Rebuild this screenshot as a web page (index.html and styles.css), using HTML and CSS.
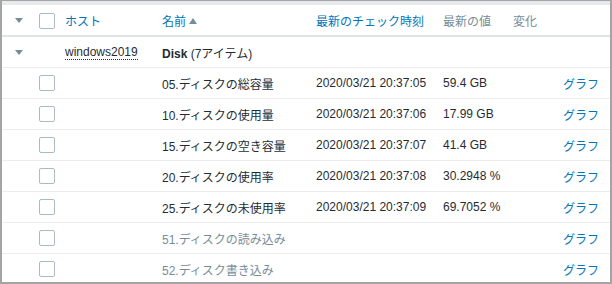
FILE: index.html
```html
<!DOCTYPE html>
<html lang="ja">
<head>
    <meta charset="UTF-8">
    <title>最新データ</title>
    <link rel="stylesheet" href="styles.css">
</head>
<body>
    <div class="frame">
        <div class="list">
            <div class="row head">
                <div class="cell toggle"><span class="arrow-down"></span></div>
                <div class="cell check"><span class="box"></span></div>
                <div class="cell link">ホスト</div>
                <div class="cell link">名前<span class="sort-up"></span></div>
                <div class="cell link">最新のチェック時刻</div>
                <div class="cell muted">最新の値</div>
                <div class="cell muted">変化</div>
                <div class="cell graph"></div>
            </div>

            <div class="row group">
                <div class="cell toggle"><span class="arrow-down"></span></div>
                <div class="cell check"></div>
                <div class="cell"><span class="host">windows2019</span></div>
                <div class="cell wide"><span><b>Disk</b> (7アイテム)</span></div>
            </div>

            <div class="row">
                <div class="cell toggle"></div>
                <div class="cell check"><span class="box"></span></div>
                <div class="cell"></div>
                <div class="cell">05.ディスクの総容量</div>
                <div class="cell">2020/03/21 20:37:05</div>
                <div class="cell">59.4 GB</div>
                <div class="cell"></div>
                <div class="cell graph"><a href="#">グラフ</a></div>
            </div>
            <div class="row">
                <div class="cell toggle"></div>
                <div class="cell check"><span class="box"></span></div>
                <div class="cell"></div>
                <div class="cell">10.ディスクの使用量</div>
                <div class="cell">2020/03/21 20:37:06</div>
                <div class="cell">17.99 GB</div>
                <div class="cell"></div>
                <div class="cell graph"><a href="#">グラフ</a></div>
            </div>
            <div class="row">
                <div class="cell toggle"></div>
                <div class="cell check"><span class="box"></span></div>
                <div class="cell"></div>
                <div class="cell">15.ディスクの空き容量</div>
                <div class="cell">2020/03/21 20:37:07</div>
                <div class="cell">41.4 GB</div>
                <div class="cell"></div>
                <div class="cell graph"><a href="#">グラフ</a></div>
            </div>
            <div class="row">
                <div class="cell toggle"></div>
                <div class="cell check"><span class="box"></span></div>
                <div class="cell"></div>
                <div class="cell">20.ディスクの使用率</div>
                <div class="cell">2020/03/21 20:37:08</div>
                <div class="cell">30.2948 %</div>
                <div class="cell"></div>
                <div class="cell graph"><a href="#">グラフ</a></div>
            </div>
            <div class="row">
                <div class="cell toggle"></div>
                <div class="cell check"><span class="box"></span></div>
                <div class="cell"></div>
                <div class="cell">25.ディスクの未使用率</div>
                <div class="cell">2020/03/21 20:37:09</div>
                <div class="cell">69.7052 %</div>
                <div class="cell"></div>
                <div class="cell graph"><a href="#">グラフ</a></div>
            </div>
            <div class="row disabled">
                <div class="cell toggle"></div>
                <div class="cell check"><span class="box"></span></div>
                <div class="cell"></div>
                <div class="cell">51.ディスクの読み込み</div>
                <div class="cell"></div>
                <div class="cell"></div>
                <div class="cell"></div>
                <div class="cell graph"><a href="#">グラフ</a></div>
            </div>
            <div class="row disabled">
                <div class="cell toggle"></div>
                <div class="cell check"><span class="box"></span></div>
                <div class="cell"></div>
                <div class="cell">52.ディスク書き込み</div>
                <div class="cell"></div>
                <div class="cell"></div>
                <div class="cell"></div>
                <div class="cell graph"><a href="#">グラフ</a></div>
            </div>
        </div>
    </div>
</body>
</html>
```

FILE: styles.css
```css
body {
    margin: 0;
    font-family: "Liberation Sans", Arial, "Noto Sans CJK JP", sans-serif;
    font-size: 12px;
    color: #1f2c33;
    background: #fff;
}
.frame {
    width: 612px;
    height: 284px;
    box-sizing: border-box;
    border: 2px solid #a4a4a4;
    border-top-width: 1px;
    overflow: hidden;
}
.list {
    border-top: 4px solid #e6eaed;
}
.row {
    display: grid;
    grid-template-columns: 30px 28px 97px 154px 127px 70px 52px 50px;
    height: 30px;
    border-bottom: 1px solid #ebeef0;
}
.row.head {
    height: 29px;
    padding-top: 1px;
    border-bottom: 2px solid #dfe4e7;
}
.cell {
    display: flex;
    align-items: center;
    padding-left: 5px;
    white-space: nowrap;
}
.cell.toggle {
    padding-left: 0;
    justify-content: center;
}
.cell.check {
    padding-left: 7px;
}
.cell.wide {
    grid-column: 4 / 9;
}
.cell.graph {
    justify-content: flex-end;
    padding-left: 0;
    padding-right: 11px;
}
.link {
    color: #0275b8;
}
.muted {
    color: #768d99;
}
a {
    color: #0275b8;
    text-decoration: none;
}
.disabled .cell {
    color: #768d99;
}
.disabled .cell a {
    color: #0275b8;
}
.arrow-down {
    width: 0;
    height: 0;
    border-left: 4px solid transparent;
    border-right: 4px solid transparent;
    border-top: 5px solid #768d99;
    margin-left: 3px;
}
.sort-up {
    width: 0;
    height: 0;
    border-left: 4px solid transparent;
    border-right: 4px solid transparent;
    border-bottom: 6px solid #768d99;
    margin-left: 3px;
}
.box {
    width: 16px;
    height: 16px;
    box-sizing: border-box;
    border: 1px solid #acbbc2;
    border-radius: 2px;
    background: #fff;
}
.host {
    border-bottom: 1px dotted #1f2c33;
    line-height: 14px;
}
```
